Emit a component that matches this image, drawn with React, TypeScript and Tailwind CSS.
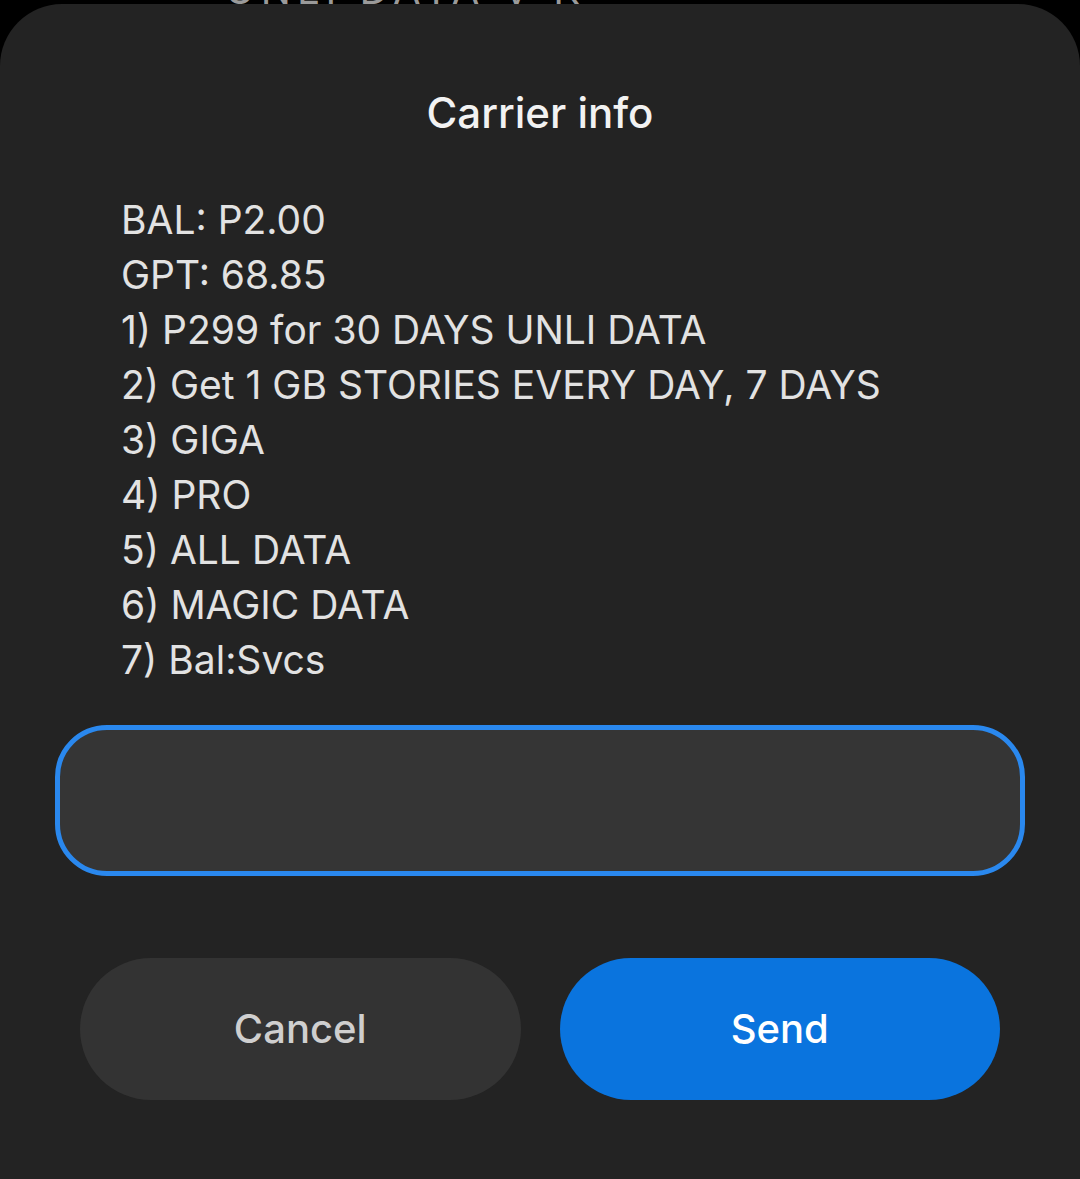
export default function App() {
  const lines = [
    'BAL: P2.00',
    'GPT: 68.85',
    '1) P299 for 30 DAYS UNLI DATA',
    '2) Get 1 GB STORIES EVERY DAY, 7 DAYS',
    '3) GIGA',
    '4) PRO',
    '5) ALL DATA',
    '6) MAGIC DATA',
    '7) Bal:Svcs',
  ];

  return (
    <div className="w-[1080px] h-[1179px] bg-black overflow-hidden relative" style={{ fontFamily: 'Inter, "Noto Sans", sans-serif' }}>
      {/* text behind the sheet, only its lower edge shows */}
      <div className="absolute top-0 left-[225px] h-[6px] overflow-hidden">
        <div className="text-[40px] leading-[40px] tracking-[6px] text-[#9a9a9a] -mt-[30px] whitespace-nowrap">UNLI DATA V K</div>
      </div>

      <div className="absolute inset-x-0 top-[4px] bottom-0 bg-[#232323] rounded-t-[62px] flex flex-col">
        <h1 className="pt-[82px] text-center text-[42px] leading-[54px] font-medium text-[#f2f2f2]">Carrier info</h1>

        <div className="mt-[52px] px-[121px] text-[39px] leading-[55px] text-[#e2e2e2]">
          {lines.map((l) => (
            <div key={l} className="whitespace-nowrap">{l}</div>
          ))}
        </div>

        <div className="mt-[38px] mx-[55px] h-[151px] rounded-[52px] border-[5px] border-[#2a88ee] bg-[#353535]" />

        <div className="mt-[82px] mx-[80px] flex gap-[39px]">
          <button className="flex-1 h-[142px] rounded-full bg-[#333333] text-[40px] font-medium text-[#cfcfcf]">Cancel</button>
          <button className="flex-1 h-[142px] rounded-full bg-[#0a74de] text-[40px] font-medium text-white">Send</button>
        </div>
      </div>
    </div>
  );
}
